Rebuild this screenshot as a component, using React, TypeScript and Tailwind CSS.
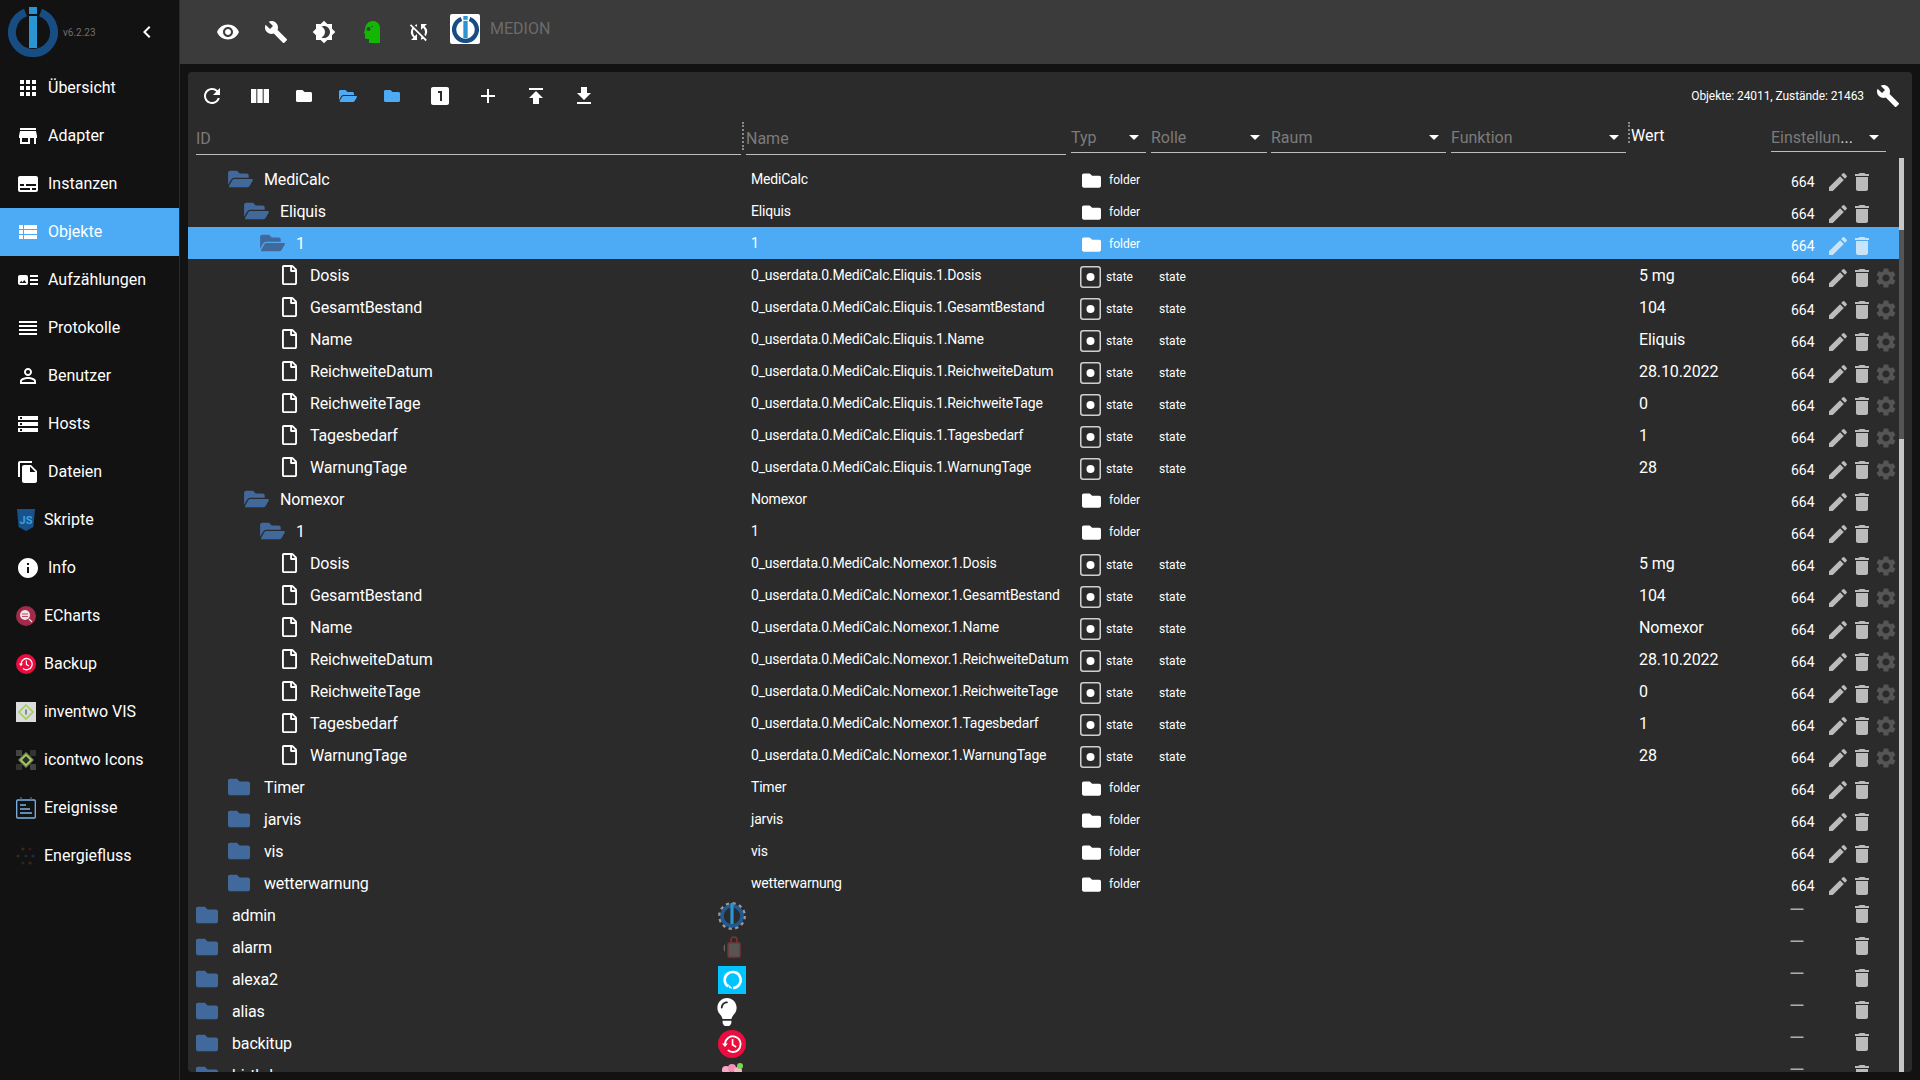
import type { ReactNode } from 'react';
import { FaFolder, FaFolderOpen, FaRegFile, FaLightbulb } from 'react-icons/fa';
import {
    MdAdd,
    MdApps,
    MdArrowDropDown,
    MdArtTrack,
    MdBrightness4,
    MdBuild,
    MdChevronLeft,
    MdDelete,
    MdEdit,
    MdFileCopy,
    MdGetApp,
    MdInfo,
    MdLooksOne,
    MdPersonOutline,
    MdPublish,
    MdRefresh,
    MdReorder,
    MdSettings,
    MdStorage,
    MdStore,
    MdSubtitles,
    MdSyncDisabled,
    MdViewColumn,
    MdViewList,
    MdVisibility,
} from 'react-icons/md';

const COLS = 'grid grid-cols-[558px_325px_80px_120px_180px_180px_140px_128px]';
const FOLDER_BLUE = 'text-[#41699b]';

function LogoMark({ className }: { className: string }) {
    return (
        <svg viewBox="0 0 50 50" className={className}>
            <path
                d="M17.5 5.5 A21 21 0 1 0 32.5 5.5"
                fill="none"
                stroke="#174d83"
                strokeWidth="8"
            />
            <rect x="21" y="0" width="8" height="7" fill="#2b94d2" />
            <rect x="21" y="9" width="8" height="32" fill="#2b94d2" />
        </svg>
    );
}

function JsIcon() {
    return (
        <svg viewBox="0 0 20 22" className="w-5 h-[22px]">
            <path d="M1 0h18l-1.6 18L10 22l-7.4-4z" fill="#17528c" />
            <text x="10" y="15" textAnchor="middle" fontSize="11" fontWeight="700" fill="#3aa0dc">
                JS
            </text>
        </svg>
    );
}

function EchartsIcon() {
    return (
        <svg viewBox="0 0 20 20" className="w-5 h-5">
            <circle cx="10" cy="10" r="10" fill="#a02c4a" />
            <circle cx="9" cy="9" r="5" fill="#f4dfe4" />
            <path d="M6 8h6M6 10.5h6" stroke="#a02c4a" strokeWidth="0.8" />
            <path d="M13 13l3 3" stroke="#f4dfe4" strokeWidth="1.2" />
        </svg>
    );
}

function BackupIcon({ className }: { className: string }) {
    return (
        <svg viewBox="0 0 20 20" className={className}>
            <circle cx="10" cy="10" r="10" fill="#ec0d3f" />
            <path
                d="M5 10a5.6 5.6 0 1 1 2 4.4"
                fill="none"
                stroke="#fff"
                strokeWidth="1.3"
            />
            <path d="M2.8 9.6h4.2L5 12.2z" fill="#fff" />
            <path d="M10.4 6.5v4l2.6 1.6" fill="none" stroke="#fff" strokeWidth="1.2" />
        </svg>
    );
}

function InventwoIcon() {
    return (
        <svg viewBox="0 0 20 20" className="w-5 h-5">
            <rect width="20" height="20" fill="#dcdcdc" />
            <path d="M10 3l7 7-7 7-7-7z" fill="none" stroke="#9ed05a" strokeWidth="1.6" />
            <rect x="9.4" y="7.5" width="1.2" height="5" fill="#555" />
        </svg>
    );
}

function IcontwoIcon() {
    return (
        <svg viewBox="0 0 20 20" className="w-5 h-5">
            <rect x="0" y="0" width="6" height="6" fill="#444" />
            <rect x="14" y="0" width="6" height="6" fill="#333" />
            <rect x="0" y="14" width="6" height="6" fill="#333" />
            <rect x="14" y="14" width="6" height="6" fill="#444" />
            <path d="M10 2l8 8-8 8-8-8z" fill="#7a8a55" />
            <path d="M10 5l5 5-5 5-5-5z" fill="#2b2b2b" stroke="#a9d35f" strokeWidth="1.5" />
        </svg>
    );
}

function EventsIcon() {
    return (
        <svg viewBox="0 0 20 22" className="w-5 h-[22px]">
            <rect x="0.7" y="3" width="18.6" height="18" rx="1" fill="none" stroke="#7fb4e6" strokeWidth="1.3" />
            <path d="M5 0v3M15 0v3" stroke="#3f74a8" strokeWidth="1.2" />
            <path d="M4 8h6M4 12h10M4 16h12" stroke="#7fb4e6" strokeWidth="1.4" />
        </svg>
    );
}

function FlowIcon() {
    return (
        <svg viewBox="0 0 20 20" className="w-5 h-5">
            <circle cx="7" cy="3" r="1.6" fill="#33301a" />
            <circle cx="14" cy="3" r="1.6" fill="#3a1a1f" />
            <circle cx="2" cy="10" r="1.6" fill="#2a331a" />
            <circle cx="10" cy="10" r="1.6" fill="#2a2a2a" />
            <circle cx="17" cy="10" r="1.6" fill="#16303f" />
            <circle cx="7" cy="17" r="1.6" fill="#1d2a1d" />
            <circle cx="14" cy="17" r="1.6" fill="#3a2a14" />
        </svg>
    );
}

function StateIcon() {
    return (
        <svg viewBox="0 0 21 22" className="w-[21px] h-[22px] shrink-0">
            <rect x="0.75" y="0.75" width="19.5" height="20.5" rx="2.5" fill="none" stroke="#d0d0d0" strokeWidth="1.5" />
            <circle cx="10.5" cy="11" r="4" fill="#fff" />
        </svg>
    );
}

function HeadIcon() {
    return (
        <svg viewBox="0 0 16 22" className="w-4 h-[22px]">
            <path
                d="M9 0C13 0 16 3 16 7V22H5V18H2.5C1.5 18 1 17 1 16V13L0 11.5 1 9C1 4 4 0 9 0Z"
                fill="#13b703"
            />
            <circle cx="4.5" cy="8" r="2" fill="#2b4a2b" />
            <circle cx="8" cy="5.5" r="0.8" fill="#2b4a2b" />
        </svg>
    );
}

function AdminIcon() {
    return (
        <svg viewBox="0 0 28 28" className="w-7 h-7">
            <circle cx="14" cy="14" r="12.4" fill="none" stroke="#9a9a9a" strokeWidth="3" strokeDasharray="3.2 3.3" />
            <circle cx="14" cy="14" r="10" fill="#2b2b2b" stroke="#1f5a93" strokeWidth="3.6" />
            <rect x="12.4" y="1" width="3.2" height="21" fill="#2b94d2" />
        </svg>
    );
}

function AlarmIcon() {
    return (
        <svg viewBox="0 0 28 28" className="w-7 h-7">
            <path d="M7 10c-2 2-2 6 0 8z" fill="#666" />
            <rect x="10" y="9" width="12" height="14" rx="1" fill="#555" stroke="#7a3434" strokeWidth="1.4" />
            <path d="M13 9V6a3 3 0 0 1 6 0v3" fill="none" stroke="#7a3434" strokeWidth="1.6" />
        </svg>
    );
}

function AlexaIcon() {
    return (
        <svg viewBox="0 0 28 28" className="w-7 h-7">
            <rect width="28" height="28" fill="#00c3ff" />
            <path d="M10 20.5A8 8 0 1 1 15 22" fill="none" stroke="#fff" strokeWidth="2.6" />
            <path d="M10 18l1 4 3.6.4z" fill="#fff" />
        </svg>
    );
}

function FlowerIcon() {
    return (
        <svg viewBox="0 0 28 28" className="w-7 h-7">
            <circle cx="8" cy="8" r="4" fill="#f7a8c4" />
            <circle cx="14" cy="6" r="4" fill="#f48fb1" />
            <circle cx="20" cy="9" r="4" fill="#f7b6cc" />
            <circle cx="22" cy="4" r="3" fill="#7bd64f" />
        </svg>
    );
}

const menu: { label: string; icon: ReactNode; active?: boolean }[] = [
    { label: 'Übersicht', icon: <MdApps size={24} /> },
    { label: 'Adapter', icon: <MdStore size={24} /> },
    { label: 'Instanzen', icon: <MdSubtitles size={24} /> },
    { label: 'Objekte', icon: <MdViewList size={24} />, active: true },
    { label: 'Aufzählungen', icon: <MdArtTrack size={24} /> },
    { label: 'Protokolle', icon: <MdReorder size={24} /> },
    { label: 'Benutzer', icon: <MdPersonOutline size={24} /> },
    { label: 'Hosts', icon: <MdStorage size={24} /> },
    { label: 'Dateien', icon: <MdFileCopy size={24} /> },
    { label: 'Skripte', icon: <JsIcon /> },
    { label: 'Info', icon: <MdInfo size={24} /> },
    { label: 'ECharts', icon: <EchartsIcon /> },
    { label: 'Backup', icon: <BackupIcon className="w-5 h-5" /> },
    { label: 'inventwo VIS', icon: <InventwoIcon /> },
    { label: 'icontwo Icons', icon: <IcontwoIcon /> },
    { label: 'Ereignisse', icon: <EventsIcon /> },
    { label: 'Energiefluss', icon: <FlowIcon /> },
];

type Row = {
    id: string;
    name?: string;
    kind: 'open' | 'closed' | 'file' | 'root';
    pad: string;
    value?: string;
    selected?: boolean;
    rootIcon?: ReactNode;
};

const stateRows = (medicine: string, level: string, dose: string): Row[] =>
    [
        ['Dosis', dose],
        ['GesamtBestand', '104'],
        ['Name', medicine],
        ['ReichweiteDatum', '28.10.2022'],
        ['ReichweiteTage', '0'],
        ['Tagesbedarf', '1'],
        ['WarnungTage', '28'],
    ].map(([id, value]) => ({
        id,
        name: `0_userdata.0.MediCalc.${medicine}.1.${id}`,
        kind: 'file' as const,
        pad: level,
        value,
    }));

const rows: Row[] = [
    { id: 'MediCalc', name: 'MediCalc', kind: 'open', pad: 'pl-[40px]' },
    { id: 'Eliquis', name: 'Eliquis', kind: 'open', pad: 'pl-[56px]' },
    { id: '1', name: '1', kind: 'open', pad: 'pl-[72px]', selected: true },
    ...stateRows('Eliquis', 'pl-[94px]', '5 mg'),
    { id: 'Nomexor', name: 'Nomexor', kind: 'open', pad: 'pl-[56px]' },
    { id: '1', name: '1', kind: 'open', pad: 'pl-[72px]' },
    ...stateRows('Nomexor', 'pl-[94px]', '5 mg'),
    { id: 'Timer', name: 'Timer', kind: 'closed', pad: 'pl-[40px]' },
    { id: 'jarvis', name: 'jarvis', kind: 'closed', pad: 'pl-[40px]' },
    { id: 'vis', name: 'vis', kind: 'closed', pad: 'pl-[40px]' },
    { id: 'wetterwarnung', name: 'wetterwarnung', kind: 'closed', pad: 'pl-[40px]' },
    { id: 'admin', kind: 'root', pad: 'pl-2', rootIcon: <AdminIcon /> },
    { id: 'alarm', kind: 'root', pad: 'pl-2', rootIcon: <AlarmIcon /> },
    { id: 'alexa2', kind: 'root', pad: 'pl-2', rootIcon: <AlexaIcon /> },
    {
        id: 'alias',
        kind: 'root',
        pad: 'pl-2',
        rootIcon: <FaLightbulb className="w-[22px] h-7 text-white -ml-[2px]" />,
    },
    { id: 'backitup', kind: 'root', pad: 'pl-2', rootIcon: <BackupIcon className="w-7 h-7" /> },
    { id: 'birthdays', kind: 'root', pad: 'pl-2', rootIcon: <FlowerIcon /> },
];

function HeaderSelect({ label, width }: { label: string; width: string }) {
    return (
        <div className={`${width} h-[33px] flex items-end justify-between border-b border-[#bdbdbd] text-[#7b7b7b] leading-[19px] pb-[5px]`}>
            <span>{label}</span>
            <MdArrowDropDown size={24} className="text-white -mb-[2px]" />
        </div>
    );
}

function TreeRow({ row }: { row: Row }) {
    const isRoot = row.kind === 'root';
    const iconColor = row.selected ? 'text-[#c7e4fb]' : 'text-[#bbbbbb]';

    return (
        <div className={`${COLS} h-8 shrink-0 text-white ${row.selected ? 'bg-[#4dabf5]' : ''}`}>
            <div className={`${row.pad} flex items-center`}>
                {row.kind === 'open' && (
                    <span className="w-9 shrink-0">
                        <FaFolderOpen className={`w-[25px] h-[22px] ${FOLDER_BLUE}`} />
                    </span>
                )}
                {(row.kind === 'closed' || isRoot) && (
                    <span className="w-9 shrink-0">
                        <FaFolder className={`w-[22px] h-[22px] ${FOLDER_BLUE}`} />
                    </span>
                )}
                {row.kind === 'file' && (
                    <span className="w-[28px] shrink-0">
                        <FaRegFile className="w-[15px] h-5 text-white" />
                    </span>
                )}
                <span className="text-[16px] pt-[2px] tracking-[-0.15px]">{row.id}</span>
                {isRoot && <span className="ml-auto w-7 self-start mt-[3px]">{row.rootIcon}</span>}
            </div>
            <div className="pl-[5px] flex items-center text-[14px] tracking-[-0.2px] whitespace-nowrap">
                {row.name}
            </div>
            {isRoot ? (
                <div />
            ) : row.kind === 'file' ? (
                <div className="pl-[9px] pt-[3px] flex items-center gap-[5px] text-[12px]">
                    <StateIcon />
                    <span>state</span>
                </div>
            ) : (
                <div className="pl-[11px] pt-[2px] flex items-center gap-2 text-[12px]">
                    <FaFolder className="w-[19px] h-[19px] text-white shrink-0" />
                    <span>folder</span>
                </div>
            )}
            <div className="pl-2 pt-[3px] flex items-center text-[12px]">
                {row.kind === 'file' ? 'state' : ''}
            </div>
            <div />
            <div />
            <div className="pl-2 pt-[2px] flex items-center text-[16px] tracking-[-0.1px]">{row.value}</div>
            {isRoot ? (
                <div className="flex items-start">
                    <span className="ml-[18px] mt-px w-[61px] h-5 leading-5 text-[20px] text-[#aaaaaa]">—</span>
                    <MdDelete size={24} className={`mt-[3px] ${iconColor}`} />
                </div>
            ) : (
                <div className="flex items-start pt-[7px] pl-[20px]">
                    <span className="w-[35px] leading-6 text-[14px]">664</span>
                    <MdEdit size={24} className={iconColor} />
                    <MdDelete size={24} className={iconColor} />
                    {row.kind === 'file' && <MdSettings size={24} className="text-[#555555]" />}
                </div>
            )}
        </div>
    );
}

export default function App() {
    return (
        <div className="flex h-screen w-screen overflow-hidden bg-[#121212] font-[Roboto,sans-serif] text-white">
            <aside className="w-[180px] shrink-0 border-r border-[#2b2b2b] flex flex-col">
                <div className="h-16 shrink-0 flex items-center">
                    <LogoMark className="ml-2 w-[50px] h-[50px] shrink-0" />
                    <span className="ml-[5px] text-[10px] text-[#707070]">v6.2.23</span>
                    <MdChevronLeft size={24} className="ml-[39px] text-white" />
                </div>
                {menu.map((item) => (
                    <div
                        key={item.label}
                        className={`h-12 shrink-0 flex items-center gap-2 pl-4 text-[16px] ${item.active ? 'bg-[#4dabf5]' : ''}`}
                    >
                        {item.icon}
                        <span>{item.label}</span>
                    </div>
                ))}
            </aside>

            <div className="flex-1 min-w-0 flex flex-col">
                <header className="h-16 shrink-0 bg-[#3b3b3b] flex items-center pl-[24px]">
                    <div className="w-12 flex justify-center"><MdVisibility size={24} /></div>
                    <div className="w-12 flex justify-center"><MdBuild size={24} /></div>
                    <div className="w-12 flex justify-center"><MdBrightness4 size={24} /></div>
                    <div className="w-12 flex justify-center"><HeadIcon /></div>
                    <div className="w-[46px] flex justify-center"><MdSyncDisabled size={24} /></div>
                    <div className="ml-2 mb-[6px] w-[30px] h-[30px] rounded-[2px] bg-white flex items-center justify-center">
                        <LogoMark className="w-[27px] h-[27px]" />
                    </div>
                    <span className="ml-[10px] mb-[6px] text-[16px] text-[#6b6b6b]">MEDION</span>
                </header>

                <div className="flex-1 min-h-0 pl-2 pr-2 py-2">
                    <div className="h-full bg-[#2b2b2b] rounded flex flex-col overflow-hidden">
                        <div className="h-12 shrink-0 flex items-center pr-3">
                            <div className="w-12 flex justify-center"><MdRefresh size={24} /></div>
                            <div className="w-12 flex justify-center"><MdViewColumn size={24} /></div>
                            <div className="w-10 flex justify-center"><FaFolder size={16} /></div>
                            <div className="ml-1 w-10 flex justify-center"><FaFolderOpen className="w-[18px] h-4 text-[#4dabf5]" /></div>
                            <div className="ml-1 w-10 flex justify-center"><FaFolder size={16} className="text-[#4dabf5]" /></div>
                            <div className="ml-1 w-12 flex justify-center"><MdLooksOne size={24} /></div>
                            <div className="w-12 flex justify-center"><MdAdd size={24} /></div>
                            <div className="w-12 flex justify-center"><MdPublish size={24} /></div>
                            <div className="w-12 flex justify-center"><MdGetApp size={24} /></div>
                            <span className="ml-auto text-[12px] tracking-[-0.08px] mr-[12px]">Objekte: 24011, Zustände: 21463</span>
                            <MdBuild size={24} />
                        </div>

                        <div className={`${COLS} h-[38px] shrink-0 text-[16px] leading-[19px] mr-[13px]`}>
                            <div className="flex items-start">
                                <div className="ml-2 w-[545px] h-[35px] flex items-end pb-[6px] border-b border-[#bdbdbd] text-[#7b7b7b]">
                                    ID
                                </div>
                                <div className="ml-px mt-[2px] h-[28px] border-l-2 border-dotted border-[#8a8a8a]" />
                            </div>
                            <div className="w-[320px] h-[35px] flex items-end pb-[6px] border-b border-[#bdbdbd] text-[#7b7b7b]">
                                Name
                            </div>
                            <HeaderSelect label="Typ" width="w-[75px]" />
                            <HeaderSelect label="Rolle" width="w-[116px]" />
                            <HeaderSelect label="Raum" width="w-[175px]" />
                            <div className="flex items-start">
                                <HeaderSelect label="Funktion" width="w-[175px]" />
                                <div className="ml-[2px] mt-[2px] h-[21px] border-l-2 border-dotted border-[#8a8a8a]" />
                            </div>
                            <div className="pt-[6px]">Wert</div>
                            <div className="w-[115px] h-[32px] flex items-end justify-between border-b border-[#bdbdbd] pb-[4px] text-[#7b7b7b]">
                                <span>
                                    Einstellun<span className="text-[#d8d8d8]">...</span>
                                </span>
                                <MdArrowDropDown size={24} className="text-white -mb-[2px]" />
                            </div>
                        </div>

                        <div className="flex-1 min-h-0 flex pr-2 overflow-hidden">
                            <div className="flex-1 min-w-0 flex flex-col pt-[5px] overflow-hidden">
                                {rows.map((row, i) => (
                                    <TreeRow key={i} row={row} />
                                ))}
                            </div>
                            <div className="w-[5px] shrink-0 bg-[#c8c8c8]">
                                <div className="mt-[72px] h-[209px] bg-[#555555]" />
                            </div>
                        </div>
                    </div>
                </div>
            </div>
        </div>
    );
}
